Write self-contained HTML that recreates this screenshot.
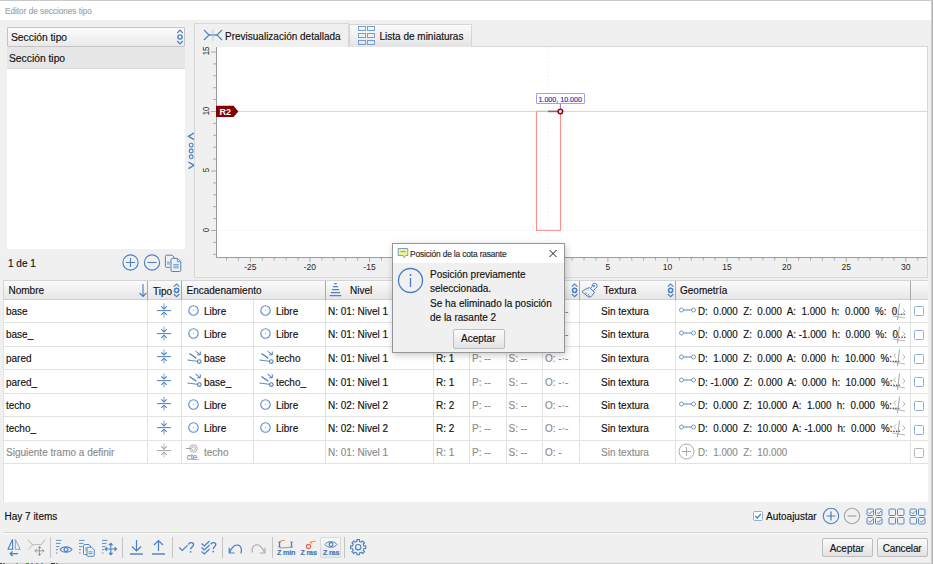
<!DOCTYPE html>
<html><head><meta charset="utf-8"><style>
html,body{margin:0;padding:0;}
body{width:933px;height:564px;overflow:hidden;position:relative;background:#f0f0f0;font-family:"Liberation Sans",sans-serif;}
.t{position:absolute;white-space:nowrap;line-height:1;-webkit-text-stroke:0.15px;}
.b{position:absolute;}
.s{position:absolute;overflow:visible;}
</style></head><body>
<div class="b" style="left:0px;top:0px;width:933px;height:1px;background:#c9c9c9"></div>
<div class="b" style="left:0px;top:1px;width:931px;height:19px;background:#ffffff"></div>
<div class="t" style="left:5.00px;top:7.65px;font-size:8.2px;color:#a3a3a3;">Editor de secciones tipo</div>
<div class="b" style="left:931px;top:1px;width:2px;height:563px;background:linear-gradient(to right,#d9d9d9,#a9a9a9)"></div>
<div class="b" style="left:7px;top:27px;width:178px;height:20px;background:linear-gradient(#fdfdfd,#e9e9e9);border:1px solid #c4c4c4;box-sizing:border-box;border-radius:1px"></div>
<div class="t" style="left:11.00px;top:32.60px;font-size:10.3px;color:#101010;">Sección tipo</div>
<svg class="s" style="left:175px;top:28px;" width="10" height="18" viewBox="0 0 10 18"><path d="M2.2 5 L5 2.2 L7.8 5" fill="none" stroke="#4a7ec2" stroke-width="1.2"/><circle cx="5" cy="9" r="2.1" fill="none" stroke="#4a7ec2" stroke-width="1.4"/><path d="M2.2 13 L5 15.8 L7.8 13" fill="none" stroke="#4a7ec2" stroke-width="1.2"/></svg>
<div class="b" style="left:7px;top:47px;width:178px;height:202px;background:#ffffff"></div>
<div class="b" style="left:7px;top:47px;width:178px;height:22px;background:#e6e6e6;border-bottom:1px solid #d9d9d9;box-sizing:border-box"></div>
<div class="t" style="left:9.00px;top:53.60px;font-size:10.3px;color:#101010;">Sección tipo</div>
<div class="t" style="left:8.00px;top:258.75px;font-size:10px;color:#101010;">1 de 1</div>
<svg class="s" style="left:121px;top:253px;" width="20" height="20" viewBox="0 0 20 20"><circle cx="9.5" cy="9.5" r="7.6" fill="none" stroke="#4a7ec2" stroke-width="1.1"/><path d="M9.5 5v9M5 9.5h9" stroke="#4a7ec2" stroke-width="1.1"/></svg>
<svg class="s" style="left:142px;top:253px;" width="20" height="20" viewBox="0 0 20 20"><circle cx="10" cy="9.5" r="7.6" fill="none" stroke="#4a7ec2" stroke-width="1.1"/><path d="M5.5 9.5h9" stroke="#4a7ec2" stroke-width="1.1"/></svg>
<svg class="s" style="left:164px;top:254px;" width="19" height="19" viewBox="0 0 19 19"><g fill="none" stroke="#4f82c2" stroke-width="1"><path d="M2.6 1.2h5.6l1.8 1.8v1 M6 13.4h-3.4a1.2 1.2 0 0 1 -1.2 -1.2v-9.8a1.2 1.2 0 0 1 1.2 -1.2"/><path d="M8.2 4.4h5.3l3.3 3.3v8.6a1.2 1.2 0 0 1 -1.2 1.2h-7.4a1.2 1.2 0 0 1 -1.2 -1.2v-10.7a1.2 1.2 0 0 1 1.2 -1.2z" fill="#f0f0f0"/><path d="M13.3 4.6v3.2h3.3" stroke-width="0.8"/><path d="M9.3 10.6h5.5M9.3 12.2h5.5M9.3 13.8h5.5M3 8.3h3M3 10h3" stroke-width="0.9" opacity="0.85"/></g></svg>
<svg class="s" style="left:186px;top:130px;" width="9" height="40" viewBox="0 0 9 40"><path d="M8 3 L2.5 6.3 L8 9.6" fill="none" stroke="#4a7ec2" stroke-width="1.4"/><circle cx="5.2" cy="15.2" r="1.9" fill="none" stroke="#4a7ec2" stroke-width="1.1"/><circle cx="5.2" cy="21" r="1.9" fill="none" stroke="#4a7ec2" stroke-width="1.1"/><circle cx="5.2" cy="26.8" r="1.9" fill="none" stroke="#4a7ec2" stroke-width="1.1"/><path d="M2.5 32 L8 35.3 L2.5 38.6" fill="none" stroke="#4a7ec2" stroke-width="1.4"/></svg>
<div class="b" style="left:194px;top:46px;width:734px;height:232px;border:1px solid #d7d7d7;box-sizing:border-box;background:#f0f0f0"></div>
<div class="b" style="left:349px;top:24px;width:123px;height:23px;background:linear-gradient(#fafafa,#e4e4e4);border:1px solid #d7d7d7;border-bottom:none;box-sizing:border-box"></div>
<div class="b" style="left:194px;top:23px;width:155px;height:24px;background:#f0f0f0;border:1px solid #d7d7d7;border-bottom:none;box-sizing:border-box"></div>
<svg class="s" style="left:203px;top:29px;" width="20" height="12" viewBox="0 0 20 12"><path d="M1 1 L6 6 L1 11" fill="none" stroke="#4a7fc1" stroke-width="1.1"/><path d="M19 1 L14 6 L19 11" fill="none" stroke="#4a7fc1" stroke-width="1.1"/><path d="M6 6h8" stroke="#4a7fc1" stroke-width="1.3"/><path d="M10 0v12" stroke="#b9cde6" stroke-width="1"/></svg>
<div class="t" style="left:225.00px;top:31.75px;font-size:10px;color:#101010;">Previsualización detallada</div>
<svg class="s" style="left:357px;top:25px;" width="19" height="21" viewBox="0 0 19 21"><g fill="none" stroke="#6f9ad0" stroke-width="0.95"><rect x="1.5" y="1.5" width="7" height="4"/><rect x="10.5" y="1.5" width="7" height="4"/><rect x="1.5" y="8.5" width="7" height="4"/><rect x="10.5" y="8.5" width="7" height="4"/><rect x="1.5" y="15.5" width="7" height="4"/><rect x="10.5" y="15.5" width="7" height="4"/></g></svg>
<div class="t" style="left:379.50px;top:31.75px;font-size:10px;color:#101010;">Lista de miniaturas</div>
<div class="b" style="left:217px;top:47px;width:710px;height:210px;background:#ffffff"></div>
<div class="b" style="left:215.6px;top:47px;width:1.2px;height:211px;background:#9c9c9c"></div>
<div class="b" style="left:216px;top:256.6px;width:711px;height:1.2px;background:#9c9c9c"></div>
<svg class="s" style="left:0;top:0" width="933" height="564"><g stroke="#9a9a9a" stroke-width="0.8"><line x1="226.51" y1="257" x2="226.51" y2="260.5" /><line x1="238.43" y1="257" x2="238.43" y2="260.5" /><line x1="250.35" y1="257" x2="250.35" y2="262" /><line x1="262.27" y1="257" x2="262.27" y2="260.5" /><line x1="274.19" y1="257" x2="274.19" y2="260.5" /><line x1="286.10" y1="257" x2="286.10" y2="260.5" /><line x1="298.02" y1="257" x2="298.02" y2="260.5" /><line x1="309.94" y1="257" x2="309.94" y2="262" /><line x1="321.86" y1="257" x2="321.86" y2="260.5" /><line x1="333.78" y1="257" x2="333.78" y2="260.5" /><line x1="345.69" y1="257" x2="345.69" y2="260.5" /><line x1="357.61" y1="257" x2="357.61" y2="260.5" /><line x1="369.53" y1="257" x2="369.53" y2="262" /><line x1="381.45" y1="257" x2="381.45" y2="260.5" /><line x1="393.37" y1="257" x2="393.37" y2="260.5" /><line x1="405.28" y1="257" x2="405.28" y2="260.5" /><line x1="417.20" y1="257" x2="417.20" y2="260.5" /><line x1="429.12" y1="257" x2="429.12" y2="262" /><line x1="441.04" y1="257" x2="441.04" y2="260.5" /><line x1="452.96" y1="257" x2="452.96" y2="260.5" /><line x1="464.87" y1="257" x2="464.87" y2="260.5" /><line x1="476.79" y1="257" x2="476.79" y2="260.5" /><line x1="488.71" y1="257" x2="488.71" y2="262" /><line x1="500.63" y1="257" x2="500.63" y2="260.5" /><line x1="512.55" y1="257" x2="512.55" y2="260.5" /><line x1="524.46" y1="257" x2="524.46" y2="260.5" /><line x1="536.38" y1="257" x2="536.38" y2="260.5" /><line x1="548.30" y1="257" x2="548.30" y2="262" /><line x1="560.22" y1="257" x2="560.22" y2="260.5" /><line x1="572.14" y1="257" x2="572.14" y2="260.5" /><line x1="584.05" y1="257" x2="584.05" y2="260.5" /><line x1="595.97" y1="257" x2="595.97" y2="260.5" /><line x1="607.89" y1="257" x2="607.89" y2="262" /><line x1="619.81" y1="257" x2="619.81" y2="260.5" /><line x1="631.73" y1="257" x2="631.73" y2="260.5" /><line x1="643.64" y1="257" x2="643.64" y2="260.5" /><line x1="655.56" y1="257" x2="655.56" y2="260.5" /><line x1="667.48" y1="257" x2="667.48" y2="262" /><line x1="679.40" y1="257" x2="679.40" y2="260.5" /><line x1="691.32" y1="257" x2="691.32" y2="260.5" /><line x1="703.23" y1="257" x2="703.23" y2="260.5" /><line x1="715.15" y1="257" x2="715.15" y2="260.5" /><line x1="727.07" y1="257" x2="727.07" y2="262" /><line x1="738.99" y1="257" x2="738.99" y2="260.5" /><line x1="750.91" y1="257" x2="750.91" y2="260.5" /><line x1="762.82" y1="257" x2="762.82" y2="260.5" /><line x1="774.74" y1="257" x2="774.74" y2="260.5" /><line x1="786.66" y1="257" x2="786.66" y2="262" /><line x1="798.58" y1="257" x2="798.58" y2="260.5" /><line x1="810.50" y1="257" x2="810.50" y2="260.5" /><line x1="822.41" y1="257" x2="822.41" y2="260.5" /><line x1="834.33" y1="257" x2="834.33" y2="260.5" /><line x1="846.25" y1="257" x2="846.25" y2="262" /><line x1="858.17" y1="257" x2="858.17" y2="260.5" /><line x1="870.09" y1="257" x2="870.09" y2="260.5" /><line x1="882.00" y1="257" x2="882.00" y2="260.5" /><line x1="893.92" y1="257" x2="893.92" y2="260.5" /><line x1="905.84" y1="257" x2="905.84" y2="262" /><line x1="917.76" y1="257" x2="917.76" y2="260.5" /><line x1="213" y1="254.30" x2="216" y2="254.30" /><line x1="213" y1="242.40" x2="216" y2="242.40" /><line x1="211" y1="230.50" x2="216" y2="230.50" /><line x1="213" y1="218.60" x2="216" y2="218.60" /><line x1="213" y1="206.70" x2="216" y2="206.70" /><line x1="213" y1="194.80" x2="216" y2="194.80" /><line x1="213" y1="182.90" x2="216" y2="182.90" /><line x1="211" y1="171.00" x2="216" y2="171.00" /><line x1="213" y1="159.10" x2="216" y2="159.10" /><line x1="213" y1="147.20" x2="216" y2="147.20" /><line x1="213" y1="135.30" x2="216" y2="135.30" /><line x1="213" y1="123.40" x2="216" y2="123.40" /><line x1="211" y1="111.50" x2="216" y2="111.50" /><line x1="213" y1="99.60" x2="216" y2="99.60" /><line x1="213" y1="87.70" x2="216" y2="87.70" /><line x1="213" y1="75.80" x2="216" y2="75.80" /><line x1="213" y1="63.90" x2="216" y2="63.90" /><line x1="211" y1="52.00" x2="216" y2="52.00" /></g></svg>
<div class="t" style="left:150.35px;width:200px;text-align:center;top:263.00px;font-size:8.5px;color:#2a2a2a;-webkit-text-stroke:0.03px">-25</div>
<div class="t" style="left:209.94px;width:200px;text-align:center;top:263.00px;font-size:8.5px;color:#2a2a2a;-webkit-text-stroke:0.03px">-20</div>
<div class="t" style="left:269.53px;width:200px;text-align:center;top:263.00px;font-size:8.5px;color:#2a2a2a;-webkit-text-stroke:0.03px">-15</div>
<div class="t" style="left:329.12px;width:200px;text-align:center;top:263.00px;font-size:8.5px;color:#2a2a2a;-webkit-text-stroke:0.03px">-10</div>
<div class="t" style="left:388.71px;width:200px;text-align:center;top:263.00px;font-size:8.5px;color:#2a2a2a;-webkit-text-stroke:0.03px">-5</div>
<div class="t" style="left:507.89px;width:200px;text-align:center;top:263.00px;font-size:8.5px;color:#2a2a2a;-webkit-text-stroke:0.03px">5</div>
<div class="t" style="left:567.48px;width:200px;text-align:center;top:263.00px;font-size:8.5px;color:#2a2a2a;-webkit-text-stroke:0.03px">10</div>
<div class="t" style="left:627.07px;width:200px;text-align:center;top:263.00px;font-size:8.5px;color:#2a2a2a;-webkit-text-stroke:0.03px">15</div>
<div class="t" style="left:686.66px;width:200px;text-align:center;top:263.00px;font-size:8.5px;color:#2a2a2a;-webkit-text-stroke:0.03px">20</div>
<div class="t" style="left:746.25px;width:200px;text-align:center;top:263.00px;font-size:8.5px;color:#2a2a2a;-webkit-text-stroke:0.03px">25</div>
<div class="t" style="left:805.84px;width:200px;text-align:center;top:263.00px;font-size:8.5px;color:#2a2a2a;-webkit-text-stroke:0.03px">30</div>
<div class="t" style="left:186px;top:47.4px;width:40px;height:8px;line-height:8px;text-align:center;font-size:8.5px;color:#2a2a2a;-webkit-text-stroke:0.05px;transform:rotate(-90deg) scaleX(0.9)">15</div>
<div class="t" style="left:186px;top:106.9px;width:40px;height:8px;line-height:8px;text-align:center;font-size:8.5px;color:#2a2a2a;-webkit-text-stroke:0.05px;transform:rotate(-90deg) scaleX(0.9)">10</div>
<div class="t" style="left:186px;top:166.4px;width:40px;height:8px;line-height:8px;text-align:center;font-size:8.5px;color:#2a2a2a;-webkit-text-stroke:0.05px;transform:rotate(-90deg) scaleX(0.9)">5</div>
<div class="t" style="left:186px;top:225.9px;width:40px;height:8px;line-height:8px;text-align:center;font-size:8.5px;color:#2a2a2a;-webkit-text-stroke:0.05px;transform:rotate(-90deg) scaleX(0.9)">0</div>
<svg class="s" style="left:0;top:0" width="933" height="564"><line x1="217" y1="230.5" x2="927" y2="230.5" stroke="#ebebeb" stroke-width="0.8" stroke-dasharray="1.5 2"/><line x1="548.3" y1="47" x2="548.3" y2="256" stroke="#ebebeb" stroke-width="0.8" stroke-dasharray="1.5 2"/><line x1="238" y1="111.4" x2="927" y2="111.4" stroke="#ffc2c2" stroke-width="1"/><rect x="536.4" y="111.4" width="24" height="118.9" fill="none" stroke="#ff7777" stroke-width="0.9"/><line x1="536.4" y1="111.4" x2="548" y2="111.4" stroke="#88ee88" stroke-width="1.2"/><line x1="548" y1="111.4" x2="558" y2="111.4" stroke="#707070" stroke-width="1.6"/><line x1="560.4" y1="104" x2="560.4" y2="109" stroke="#6b6bd8" stroke-width="0.9"/><circle cx="560.4" cy="111.4" r="2.3" fill="#d9d9d9" stroke="#8b0000" stroke-width="1.4"/><path d="M216 105.8h17.5l4.8 5.6l-4.8 5.6h-17.5z" fill="#820000"/></svg>
<div class="t" style="left:219.50px;top:107.75px;font-size:9px;color:#ffffff;font-weight:bold;-webkit-text-stroke:0">R2</div>
<div class="b" style="left:535.5px;top:93.3px;width:49.5px;height:11px;border:1px solid #a0a0f2;background:#fff;box-sizing:border-box;border-radius:1px"></div>
<div class="t" style="left:538.50px;top:96.70px;font-size:7.1px;color:#2f2fb5;">1.000, 10.000</div>
<div class="b" style="left:3px;top:280px;width:925px;height:222px;background:#ffffff;border-left:1px solid #e3e3e3;box-sizing:border-box"></div>
<div class="b" style="left:3px;top:280px;width:925px;height:20px;background:linear-gradient(#fbfbfb,#e6e6e6);border-top:1px solid #d5d5d5;border-bottom:1px solid #cfcfcf;border-left:1px solid #d5d5d5;box-sizing:border-box"></div>
<div class="b" style="left:147.20000000000002px;top:281px;width:1.3px;height:19px;background:#a9a9a9"></div>
<div class="b" style="left:180.9px;top:281px;width:1.3px;height:19px;background:#a9a9a9"></div>
<div class="b" style="left:324.9px;top:281px;width:1.3px;height:19px;background:#a9a9a9"></div>
<div class="b" style="left:578.6px;top:281px;width:1.3px;height:19px;background:#a9a9a9"></div>
<div class="b" style="left:674.9px;top:281px;width:1.3px;height:19px;background:#a9a9a9"></div>
<div class="b" style="left:909.5px;top:281px;width:1.3px;height:19px;background:#a9a9a9"></div>
<div class="b" style="left:4px;top:322.0px;width:924px;height:1px;background:#e2e2e2"></div>
<div class="b" style="left:4px;top:345.5px;width:924px;height:1px;background:#e2e2e2"></div>
<div class="b" style="left:4px;top:369.0px;width:924px;height:1px;background:#e2e2e2"></div>
<div class="b" style="left:4px;top:392.5px;width:924px;height:1px;background:#e2e2e2"></div>
<div class="b" style="left:4px;top:416.0px;width:924px;height:1px;background:#e2e2e2"></div>
<div class="b" style="left:4px;top:439.5px;width:924px;height:1px;background:#e2e2e2"></div>
<div class="b" style="left:4px;top:463.0px;width:924px;height:1px;background:#e2e2e2"></div>
<div class="b" style="left:147.0px;top:300px;width:1px;height:164px;background:#e2e2e2"></div>
<div class="b" style="left:181.0px;top:300px;width:1px;height:164px;background:#e2e2e2"></div>
<div class="b" style="left:252.5px;top:300px;width:1px;height:164px;background:#e2e2e2"></div>
<div class="b" style="left:325.0px;top:300px;width:1px;height:164px;background:#e2e2e2"></div>
<div class="b" style="left:433.0px;top:300px;width:1px;height:164px;background:#e2e2e2"></div>
<div class="b" style="left:469.0px;top:300px;width:1px;height:164px;background:#e2e2e2"></div>
<div class="b" style="left:506.0px;top:300px;width:1px;height:164px;background:#e2e2e2"></div>
<div class="b" style="left:542.0px;top:300px;width:1px;height:164px;background:#e2e2e2"></div>
<div class="b" style="left:579.0px;top:300px;width:1px;height:164px;background:#e2e2e2"></div>
<div class="b" style="left:675.0px;top:300px;width:1px;height:164px;background:#e2e2e2"></div>
<div class="b" style="left:909.5px;top:300px;width:1px;height:164px;background:#e2e2e2"></div>
<div class="t" style="left:8.50px;top:285.75px;font-size:10px;color:#101010;">Nombre</div>
<svg class="s" style="left:138px;top:283px;" width="10" height="15" viewBox="0 0 10 15"><path d="M5 1v12.5M1.6 10 L5 13.5 L8.4 10" fill="none" stroke="#4a7ec2" stroke-width="1.1"/></svg>
<div class="t" style="left:153.00px;top:286.75px;font-size:10px;color:#101010;">Tipo</div>
<svg class="s" style="left:173px;top:283px;" width="7" height="15" viewBox="0 0 7 15"><path d="M0.8 3.6 L3.6 0.9 L6.4 3.6" fill="none" stroke="#4a7ec2" stroke-width="1.1"/><circle cx="3.6" cy="7.3" r="2.1" fill="none" stroke="#4a7ec2" stroke-width="1.5"/><path d="M0.8 11 L3.6 13.7 L6.4 11" fill="none" stroke="#4a7ec2" stroke-width="1.1"/></svg>
<div class="t" style="left:186.50px;top:285.75px;font-size:10px;color:#101010;">Encadenamiento</div>
<svg class="s" style="left:329px;top:282px;" width="14" height="15" viewBox="0 0 14 15"><path d="M5.2 1.6h2.6M4 4.6h5M3 7.6h7M1.9 10.6h9.2M0.7 13.6h11.6" stroke="#4f82c2" stroke-width="1.05"/></svg>
<div class="t" style="left:350.00px;top:285.75px;font-size:10px;color:#101010;">Nivel</div>
<svg class="s" style="left:570.5px;top:283px;" width="7" height="15" viewBox="0 0 7 15"><path d="M0.8 3.6 L3.6 0.9 L6.4 3.6" fill="none" stroke="#4a7ec2" stroke-width="1.1"/><circle cx="3.6" cy="7.3" r="2.1" fill="none" stroke="#4a7ec2" stroke-width="1.5"/><path d="M0.8 11 L3.6 13.7 L6.4 11" fill="none" stroke="#4a7ec2" stroke-width="1.1"/></svg>
<svg class="s" style="left:581px;top:282px;" width="17" height="16" viewBox="0 0 17 16"><g fill="none" stroke="#4a7ec2" stroke-width="1"><path d="M9.6 6.6 L11.2 4.3 A2.5 2.5 0 1 1 14.6 6.2 L12.4 8.6"/><path d="M8.4 5.6 L13.4 10.2 L11.2 13.6 C9.8 15.1 8.2 15.4 7 14.6 L1 9.7 C2.4 8.3 5.4 6.6 8.4 5.6Z"/><circle cx="13" cy="4" r="0.7"/><path d="M4.5 10.5 l1.2 1.8M7.3 12.2 l0.6 1.6" stroke-width="0.8"/></g></svg>
<div class="t" style="left:603.50px;top:285.75px;font-size:10px;color:#101010;">Textura</div>
<svg class="s" style="left:667px;top:283px;" width="7" height="15" viewBox="0 0 7 15"><path d="M0.8 3.6 L3.6 0.9 L6.4 3.6" fill="none" stroke="#4a7ec2" stroke-width="1.1"/><circle cx="3.6" cy="7.3" r="2.1" fill="none" stroke="#4a7ec2" stroke-width="1.5"/><path d="M0.8 11 L3.6 13.7 L6.4 11" fill="none" stroke="#4a7ec2" stroke-width="1.1"/></svg>
<div class="t" style="left:680.00px;top:285.75px;font-size:10px;color:#101010;">Geometría</div>
<div class="t" style="left:6.00px;top:306.75px;font-size:10px;color:#101010;">base</div>
<svg class="s" style="left:157px;top:302.7px;" width="14" height="15" viewBox="0 0 14 15"><path d="M7 0.5v5.3" stroke="#4a7ec2" stroke-width="0.9" opacity="0.8"/><path d="M4.3 3.3 L7 6 L9.7 3.3" fill="none" stroke="#4a7ec2" stroke-width="1.1"/><path d="M0 7.6h14" stroke="#4a7ec2" stroke-width="1"/><path d="M7 14.5v-5.3" stroke="#4a7ec2" stroke-width="0.9" opacity="0.8"/><path d="M4.3 11.9 L7 9.2 L9.7 11.9" fill="none" stroke="#4a7ec2" stroke-width="1.1"/></svg>
<svg class="s" style="left:188px;top:304.9px;" width="11" height="11" viewBox="0 0 11 11"><circle cx="5.5" cy="5.5" r="4.7" fill="none" stroke="#5b8cc9" stroke-width="1.1"/><circle cx="5.5" cy="5.5" r="0.9" fill="#c2d4ec"/></svg>
<div class="t" style="left:204.00px;top:306.75px;font-size:10px;color:#101010;">Libre</div>
<svg class="s" style="left:260px;top:304.9px;" width="11" height="11" viewBox="0 0 11 11"><circle cx="5.5" cy="5.5" r="4.7" fill="none" stroke="#5b8cc9" stroke-width="1.1"/><circle cx="5.5" cy="5.5" r="0.9" fill="#c2d4ec"/></svg>
<div class="t" style="left:276.00px;top:306.75px;font-size:10px;color:#101010;">Libre</div>
<div class="t" style="left:328.00px;top:306.75px;font-size:10px;color:#101010;">N: 01: Nivel 1</div>
<div class="t" style="left:436.00px;top:306.75px;font-size:10px;color:#101010;">R: 1</div>
<div class="t" style="left:472.00px;top:306.75px;font-size:10px;color:#8c8c8c;">P: --</div>
<div class="t" style="left:508.50px;top:306.75px;font-size:10px;color:#8c8c8c;">S: --</div>
<div class="t" style="left:545.00px;top:306.75px;font-size:10px;color:#8c8c8c;">O: -·-</div>
<div class="t" style="left:525.00px;width:200px;text-align:center;top:306.75px;font-size:10px;color:#101010;">Sin textura</div>
<svg class="s" style="left:679px;top:307.0px;" width="17" height="6" viewBox="0 0 17 6"><circle cx="2.5" cy="3" r="2" fill="none" stroke="#6e98cc" stroke-width="1"/><path d="M4.5 3h8" stroke="#6e98cc" stroke-width="1.2"/><circle cx="14.5" cy="3" r="2" fill="none" stroke="#6e98cc" stroke-width="1"/></svg>
<div class="t" style="left:697.5px;top:306.00px;font-size:10.5px;color:#101010;white-space:pre;width:224px;overflow:hidden;transform:scaleX(0.933);transform-origin:0 0">D:  0.000  Z:  0.000  A:  1.000  h:  0.000  %:  0...</div>
<svg class="s" style="left:891.5px;top:302.5px;" width="14" height="18" viewBox="0 0 14 18"><path d="M7.5 0.5 L5.5 17" stroke="#9a9a9a" stroke-width="0.9"/><path d="M0.5 13 L13 15" stroke="#9a9a9a" stroke-width="0.7"/><path d="M4 4.5 L1.8 7 L4 9" fill="none" stroke="#9a9a9a" stroke-width="0.7"/><path d="M10.5 5.5 L13 8 L10.5 10.5" fill="none" stroke="#9a9a9a" stroke-width="0.7"/></svg>
<div class="b" style="left:914px;top:306px;width:9.5px;height:9.5px;border:1.1px solid #8eaedb;border-radius:1.5px;box-sizing:border-box;background:#fff"></div>
<div class="t" style="left:6.00px;top:329.75px;font-size:10px;color:#101010;">base_</div>
<svg class="s" style="left:157px;top:325.9px;" width="14" height="15" viewBox="0 0 14 15"><path d="M7 0.5v5.3" stroke="#4a7ec2" stroke-width="0.9" opacity="0.8"/><path d="M4.3 3.3 L7 6 L9.7 3.3" fill="none" stroke="#4a7ec2" stroke-width="1.1"/><path d="M0 7.6h14" stroke="#4a7ec2" stroke-width="1"/><path d="M7 14.5v-5.3" stroke="#4a7ec2" stroke-width="0.9" opacity="0.8"/><path d="M4.3 11.9 L7 9.2 L9.7 11.9" fill="none" stroke="#4a7ec2" stroke-width="1.1"/></svg>
<svg class="s" style="left:188px;top:328.1px;" width="11" height="11" viewBox="0 0 11 11"><circle cx="5.5" cy="5.5" r="4.7" fill="none" stroke="#5b8cc9" stroke-width="1.1"/><circle cx="5.5" cy="5.5" r="0.9" fill="#c2d4ec"/></svg>
<div class="t" style="left:204.00px;top:329.75px;font-size:10px;color:#101010;">Libre</div>
<svg class="s" style="left:260px;top:328.1px;" width="11" height="11" viewBox="0 0 11 11"><circle cx="5.5" cy="5.5" r="4.7" fill="none" stroke="#5b8cc9" stroke-width="1.1"/><circle cx="5.5" cy="5.5" r="0.9" fill="#c2d4ec"/></svg>
<div class="t" style="left:276.00px;top:329.75px;font-size:10px;color:#101010;">Libre</div>
<div class="t" style="left:328.00px;top:329.75px;font-size:10px;color:#101010;">N: 01: Nivel 1</div>
<div class="t" style="left:436.00px;top:329.75px;font-size:10px;color:#101010;">R: 1</div>
<div class="t" style="left:472.00px;top:329.75px;font-size:10px;color:#8c8c8c;">P: --</div>
<div class="t" style="left:508.50px;top:329.75px;font-size:10px;color:#8c8c8c;">S: --</div>
<div class="t" style="left:545.00px;top:329.75px;font-size:10px;color:#8c8c8c;">O: -·-</div>
<div class="t" style="left:525.00px;width:200px;text-align:center;top:329.75px;font-size:10px;color:#101010;">Sin textura</div>
<svg class="s" style="left:679px;top:330.2px;" width="17" height="6" viewBox="0 0 17 6"><circle cx="2.5" cy="3" r="2" fill="none" stroke="#6e98cc" stroke-width="1"/><path d="M4.5 3h8" stroke="#6e98cc" stroke-width="1.2"/><circle cx="14.5" cy="3" r="2" fill="none" stroke="#6e98cc" stroke-width="1"/></svg>
<div class="t" style="left:697.5px;top:329.00px;font-size:10.5px;color:#101010;white-space:pre;width:224px;overflow:hidden;transform:scaleX(0.933);transform-origin:0 0">D:  0.000  Z:  0.000  A: -1.000  h:  0.000  %:  0...</div>
<svg class="s" style="left:891.5px;top:325.8px;" width="14" height="18" viewBox="0 0 14 18"><path d="M7.5 0.5 L5.5 17" stroke="#9a9a9a" stroke-width="0.9"/><path d="M0.5 13 L13 15" stroke="#9a9a9a" stroke-width="0.7"/><path d="M4 4.5 L1.8 7 L4 9" fill="none" stroke="#9a9a9a" stroke-width="0.7"/><path d="M10.5 5.5 L13 8 L10.5 10.5" fill="none" stroke="#9a9a9a" stroke-width="0.7"/></svg>
<div class="b" style="left:914px;top:330px;width:9.5px;height:9.5px;border:1.1px solid #8eaedb;border-radius:1.5px;box-sizing:border-box;background:#fff"></div>
<div class="t" style="left:6.00px;top:353.75px;font-size:10px;color:#101010;">pared</div>
<svg class="s" style="left:157px;top:349.4px;" width="14" height="15" viewBox="0 0 14 15"><path d="M7 0.5v5.3" stroke="#4a7ec2" stroke-width="0.9" opacity="0.8"/><path d="M4.3 3.3 L7 6 L9.7 3.3" fill="none" stroke="#4a7ec2" stroke-width="1.1"/><path d="M0 7.6h14" stroke="#4a7ec2" stroke-width="1"/><path d="M7 14.5v-5.3" stroke="#4a7ec2" stroke-width="0.9" opacity="0.8"/><path d="M4.3 11.9 L7 9.2 L9.7 11.9" fill="none" stroke="#4a7ec2" stroke-width="1.1"/></svg>
<svg class="s" style="left:187px;top:349.8px;" width="15" height="13" viewBox="0 0 15 13"><path d="M2.5 3.5 L9.3 8.3" stroke="#4a7ec2" stroke-width="1.3"/><path d="M8.5 1 L13 4.5M13.3 1.5 v3.3 h-3.2" fill="none" stroke="#4a7ec2" stroke-width="1"/><path d="M0.5 10 L10.5 11.3" stroke="#4a7ec2" stroke-width="0.9"/><circle cx="12.3" cy="11.6" r="1.8" fill="#fff" stroke="#4a7ec2" stroke-width="1.1"/></svg>
<div class="t" style="left:204.00px;top:353.75px;font-size:10px;color:#101010;">base</div>
<svg class="s" style="left:259px;top:349.8px;" width="15" height="13" viewBox="0 0 15 13"><path d="M2.5 3.5 L9.3 8.3" stroke="#4a7ec2" stroke-width="1.3"/><path d="M8.5 1 L13 4.5M13.3 1.5 v3.3 h-3.2" fill="none" stroke="#4a7ec2" stroke-width="1"/><path d="M0.5 10 L10.5 11.3" stroke="#4a7ec2" stroke-width="0.9"/><circle cx="12.3" cy="11.6" r="1.8" fill="#fff" stroke="#4a7ec2" stroke-width="1.1"/></svg>
<div class="t" style="left:276.00px;top:353.75px;font-size:10px;color:#101010;">techo</div>
<div class="t" style="left:328.00px;top:353.75px;font-size:10px;color:#101010;">N: 01: Nivel 1</div>
<div class="t" style="left:436.00px;top:353.75px;font-size:10px;color:#101010;">R: 1</div>
<div class="t" style="left:472.00px;top:353.75px;font-size:10px;color:#8c8c8c;">P: --</div>
<div class="t" style="left:508.50px;top:353.75px;font-size:10px;color:#8c8c8c;">S: --</div>
<div class="t" style="left:545.00px;top:353.75px;font-size:10px;color:#8c8c8c;">O: -·-</div>
<div class="t" style="left:525.00px;width:200px;text-align:center;top:353.75px;font-size:10px;color:#101010;">Sin textura</div>
<svg class="s" style="left:679px;top:353.8px;" width="17" height="6" viewBox="0 0 17 6"><circle cx="2.5" cy="3" r="2" fill="none" stroke="#6e98cc" stroke-width="1"/><path d="M4.5 3h8" stroke="#6e98cc" stroke-width="1.2"/><circle cx="14.5" cy="3" r="2" fill="none" stroke="#6e98cc" stroke-width="1"/></svg>
<div class="t" style="left:697.5px;top:353.00px;font-size:10.5px;color:#101010;white-space:pre;width:224px;overflow:hidden;transform:scaleX(0.933);transform-origin:0 0">D:  1.000  Z:  0.000  A:  0.000  h:  10.000  %:...</div>
<svg class="s" style="left:891.5px;top:349.2px;" width="14" height="18" viewBox="0 0 14 18"><path d="M7.5 0.5 L5.5 17" stroke="#9a9a9a" stroke-width="0.9"/><path d="M0.5 13 L13 15" stroke="#9a9a9a" stroke-width="0.7"/><path d="M4 4.5 L1.8 7 L4 9" fill="none" stroke="#9a9a9a" stroke-width="0.7"/><path d="M10.5 5.5 L13 8 L10.5 10.5" fill="none" stroke="#9a9a9a" stroke-width="0.7"/></svg>
<div class="b" style="left:914px;top:354px;width:9.5px;height:9.5px;border:1.1px solid #8eaedb;border-radius:1.5px;box-sizing:border-box;background:#fff"></div>
<div class="t" style="left:6.00px;top:377.75px;font-size:10px;color:#101010;">pared_</div>
<svg class="s" style="left:157px;top:372.9px;" width="14" height="15" viewBox="0 0 14 15"><path d="M7 0.5v5.3" stroke="#4a7ec2" stroke-width="0.9" opacity="0.8"/><path d="M4.3 3.3 L7 6 L9.7 3.3" fill="none" stroke="#4a7ec2" stroke-width="1.1"/><path d="M0 7.6h14" stroke="#4a7ec2" stroke-width="1"/><path d="M7 14.5v-5.3" stroke="#4a7ec2" stroke-width="0.9" opacity="0.8"/><path d="M4.3 11.9 L7 9.2 L9.7 11.9" fill="none" stroke="#4a7ec2" stroke-width="1.1"/></svg>
<svg class="s" style="left:187px;top:373.2px;" width="15" height="13" viewBox="0 0 15 13"><path d="M2.5 3.5 L9.3 8.3" stroke="#4a7ec2" stroke-width="1.3"/><path d="M8.5 1 L13 4.5M13.3 1.5 v3.3 h-3.2" fill="none" stroke="#4a7ec2" stroke-width="1"/><path d="M0.5 10 L10.5 11.3" stroke="#4a7ec2" stroke-width="0.9"/><circle cx="12.3" cy="11.6" r="1.8" fill="#fff" stroke="#4a7ec2" stroke-width="1.1"/></svg>
<div class="t" style="left:204.00px;top:377.75px;font-size:10px;color:#101010;">base_</div>
<svg class="s" style="left:259px;top:373.2px;" width="15" height="13" viewBox="0 0 15 13"><path d="M2.5 3.5 L9.3 8.3" stroke="#4a7ec2" stroke-width="1.3"/><path d="M8.5 1 L13 4.5M13.3 1.5 v3.3 h-3.2" fill="none" stroke="#4a7ec2" stroke-width="1"/><path d="M0.5 10 L10.5 11.3" stroke="#4a7ec2" stroke-width="0.9"/><circle cx="12.3" cy="11.6" r="1.8" fill="#fff" stroke="#4a7ec2" stroke-width="1.1"/></svg>
<div class="t" style="left:276.00px;top:377.75px;font-size:10px;color:#101010;">techo_</div>
<div class="t" style="left:328.00px;top:377.75px;font-size:10px;color:#101010;">N: 01: Nivel 1</div>
<div class="t" style="left:436.00px;top:377.75px;font-size:10px;color:#101010;">R: 1</div>
<div class="t" style="left:472.00px;top:377.75px;font-size:10px;color:#8c8c8c;">P: --</div>
<div class="t" style="left:508.50px;top:377.75px;font-size:10px;color:#8c8c8c;">S: --</div>
<div class="t" style="left:545.00px;top:377.75px;font-size:10px;color:#8c8c8c;">O: -·-</div>
<div class="t" style="left:525.00px;width:200px;text-align:center;top:377.75px;font-size:10px;color:#101010;">Sin textura</div>
<svg class="s" style="left:679px;top:377.2px;" width="17" height="6" viewBox="0 0 17 6"><circle cx="2.5" cy="3" r="2" fill="none" stroke="#6e98cc" stroke-width="1"/><path d="M4.5 3h8" stroke="#6e98cc" stroke-width="1.2"/><circle cx="14.5" cy="3" r="2" fill="none" stroke="#6e98cc" stroke-width="1"/></svg>
<div class="t" style="left:697.5px;top:377.00px;font-size:10.5px;color:#101010;white-space:pre;width:224px;overflow:hidden;transform:scaleX(0.933);transform-origin:0 0">D: -1.000  Z:  0.000  A:  0.000  h:  10.000  %:...</div>
<svg class="s" style="left:891.5px;top:372.8px;" width="14" height="18" viewBox="0 0 14 18"><path d="M7.5 0.5 L5.5 17" stroke="#9a9a9a" stroke-width="0.9"/><path d="M0.5 13 L13 15" stroke="#9a9a9a" stroke-width="0.7"/><path d="M4 4.5 L1.8 7 L4 9" fill="none" stroke="#9a9a9a" stroke-width="0.7"/><path d="M10.5 5.5 L13 8 L10.5 10.5" fill="none" stroke="#9a9a9a" stroke-width="0.7"/></svg>
<div class="b" style="left:914px;top:377px;width:9.5px;height:9.5px;border:1.1px solid #8eaedb;border-radius:1.5px;box-sizing:border-box;background:#fff"></div>
<div class="t" style="left:6.00px;top:400.75px;font-size:10px;color:#101010;">techo</div>
<svg class="s" style="left:157px;top:396.4px;" width="14" height="15" viewBox="0 0 14 15"><path d="M7 0.5v5.3" stroke="#4a7ec2" stroke-width="0.9" opacity="0.8"/><path d="M4.3 3.3 L7 6 L9.7 3.3" fill="none" stroke="#4a7ec2" stroke-width="1.1"/><path d="M0 7.6h14" stroke="#4a7ec2" stroke-width="1"/><path d="M7 14.5v-5.3" stroke="#4a7ec2" stroke-width="0.9" opacity="0.8"/><path d="M4.3 11.9 L7 9.2 L9.7 11.9" fill="none" stroke="#4a7ec2" stroke-width="1.1"/></svg>
<svg class="s" style="left:188px;top:398.6px;" width="11" height="11" viewBox="0 0 11 11"><circle cx="5.5" cy="5.5" r="4.7" fill="none" stroke="#5b8cc9" stroke-width="1.1"/><circle cx="5.5" cy="5.5" r="0.9" fill="#c2d4ec"/></svg>
<div class="t" style="left:204.00px;top:400.75px;font-size:10px;color:#101010;">Libre</div>
<svg class="s" style="left:260px;top:398.6px;" width="11" height="11" viewBox="0 0 11 11"><circle cx="5.5" cy="5.5" r="4.7" fill="none" stroke="#5b8cc9" stroke-width="1.1"/><circle cx="5.5" cy="5.5" r="0.9" fill="#c2d4ec"/></svg>
<div class="t" style="left:276.00px;top:400.75px;font-size:10px;color:#101010;">Libre</div>
<div class="t" style="left:328.00px;top:400.75px;font-size:10px;color:#101010;">N: 02: Nivel 2</div>
<div class="t" style="left:436.00px;top:400.75px;font-size:10px;color:#101010;">R: 2</div>
<div class="t" style="left:472.00px;top:400.75px;font-size:10px;color:#8c8c8c;">P: --</div>
<div class="t" style="left:508.50px;top:400.75px;font-size:10px;color:#8c8c8c;">S: --</div>
<div class="t" style="left:545.00px;top:400.75px;font-size:10px;color:#8c8c8c;">O: -·-</div>
<div class="t" style="left:525.00px;width:200px;text-align:center;top:400.75px;font-size:10px;color:#101010;">Sin textura</div>
<svg class="s" style="left:679px;top:400.8px;" width="17" height="6" viewBox="0 0 17 6"><circle cx="2.5" cy="3" r="2" fill="none" stroke="#6e98cc" stroke-width="1"/><path d="M4.5 3h8" stroke="#6e98cc" stroke-width="1.2"/><circle cx="14.5" cy="3" r="2" fill="none" stroke="#6e98cc" stroke-width="1"/></svg>
<div class="t" style="left:697.5px;top:400.00px;font-size:10.5px;color:#101010;white-space:pre;width:224px;overflow:hidden;transform:scaleX(0.933);transform-origin:0 0">D:  0.000  Z:  10.000  A:  1.000  h:  0.000  %:...</div>
<svg class="s" style="left:891.5px;top:396.2px;" width="14" height="18" viewBox="0 0 14 18"><path d="M7.5 0.5 L5.5 17" stroke="#9a9a9a" stroke-width="0.9"/><path d="M0.5 13 L13 15" stroke="#9a9a9a" stroke-width="0.7"/><path d="M4 4.5 L1.8 7 L4 9" fill="none" stroke="#9a9a9a" stroke-width="0.7"/><path d="M10.5 5.5 L13 8 L10.5 10.5" fill="none" stroke="#9a9a9a" stroke-width="0.7"/></svg>
<div class="b" style="left:914px;top:401px;width:9.5px;height:9.5px;border:1.1px solid #8eaedb;border-radius:1.5px;box-sizing:border-box;background:#fff"></div>
<div class="t" style="left:6.00px;top:423.75px;font-size:10px;color:#101010;">techo_</div>
<svg class="s" style="left:157px;top:419.9px;" width="14" height="15" viewBox="0 0 14 15"><path d="M7 0.5v5.3" stroke="#4a7ec2" stroke-width="0.9" opacity="0.8"/><path d="M4.3 3.3 L7 6 L9.7 3.3" fill="none" stroke="#4a7ec2" stroke-width="1.1"/><path d="M0 7.6h14" stroke="#4a7ec2" stroke-width="1"/><path d="M7 14.5v-5.3" stroke="#4a7ec2" stroke-width="0.9" opacity="0.8"/><path d="M4.3 11.9 L7 9.2 L9.7 11.9" fill="none" stroke="#4a7ec2" stroke-width="1.1"/></svg>
<svg class="s" style="left:188px;top:422.1px;" width="11" height="11" viewBox="0 0 11 11"><circle cx="5.5" cy="5.5" r="4.7" fill="none" stroke="#5b8cc9" stroke-width="1.1"/><circle cx="5.5" cy="5.5" r="0.9" fill="#c2d4ec"/></svg>
<div class="t" style="left:204.00px;top:423.75px;font-size:10px;color:#101010;">Libre</div>
<svg class="s" style="left:260px;top:422.1px;" width="11" height="11" viewBox="0 0 11 11"><circle cx="5.5" cy="5.5" r="4.7" fill="none" stroke="#5b8cc9" stroke-width="1.1"/><circle cx="5.5" cy="5.5" r="0.9" fill="#c2d4ec"/></svg>
<div class="t" style="left:276.00px;top:423.75px;font-size:10px;color:#101010;">Libre</div>
<div class="t" style="left:328.00px;top:423.75px;font-size:10px;color:#101010;">N: 02: Nivel 2</div>
<div class="t" style="left:436.00px;top:423.75px;font-size:10px;color:#101010;">R: 2</div>
<div class="t" style="left:472.00px;top:423.75px;font-size:10px;color:#8c8c8c;">P: --</div>
<div class="t" style="left:508.50px;top:423.75px;font-size:10px;color:#8c8c8c;">S: --</div>
<div class="t" style="left:545.00px;top:423.75px;font-size:10px;color:#8c8c8c;">O: -·-</div>
<div class="t" style="left:525.00px;width:200px;text-align:center;top:423.75px;font-size:10px;color:#101010;">Sin textura</div>
<svg class="s" style="left:679px;top:424.2px;" width="17" height="6" viewBox="0 0 17 6"><circle cx="2.5" cy="3" r="2" fill="none" stroke="#6e98cc" stroke-width="1"/><path d="M4.5 3h8" stroke="#6e98cc" stroke-width="1.2"/><circle cx="14.5" cy="3" r="2" fill="none" stroke="#6e98cc" stroke-width="1"/></svg>
<div class="t" style="left:697.5px;top:423.00px;font-size:10.5px;color:#101010;white-space:pre;width:224px;overflow:hidden;transform:scaleX(0.933);transform-origin:0 0">D:  0.000  Z:  10.000  A: -1.000  h:  0.000  %:...</div>
<svg class="s" style="left:891.5px;top:419.8px;" width="14" height="18" viewBox="0 0 14 18"><path d="M7.5 0.5 L5.5 17" stroke="#9a9a9a" stroke-width="0.9"/><path d="M0.5 13 L13 15" stroke="#9a9a9a" stroke-width="0.7"/><path d="M4 4.5 L1.8 7 L4 9" fill="none" stroke="#9a9a9a" stroke-width="0.7"/><path d="M10.5 5.5 L13 8 L10.5 10.5" fill="none" stroke="#9a9a9a" stroke-width="0.7"/></svg>
<div class="b" style="left:914px;top:425px;width:9.5px;height:9.5px;border:1.1px solid #8eaedb;border-radius:1.5px;box-sizing:border-box;background:#fff"></div>
<div class="t" style="left:6.00px;top:447.75px;font-size:10px;color:#8c8c8c;">Siguiente tramo a definir</div>
<svg class="s" style="left:157px;top:443.4px;" width="14" height="15" viewBox="0 0 14 15"><path d="M7 0.5v5.3" stroke="#a5a5a5" stroke-width="0.9" opacity="0.8"/><path d="M4.3 3.3 L7 6 L9.7 3.3" fill="none" stroke="#a5a5a5" stroke-width="1.1"/><path d="M0 7.6h14" stroke="#a5a5a5" stroke-width="1"/><path d="M7 14.5v-5.3" stroke="#a5a5a5" stroke-width="0.9" opacity="0.8"/><path d="M4.3 11.9 L7 9.2 L9.7 11.9" fill="none" stroke="#a5a5a5" stroke-width="1.1"/></svg>
<svg class="s" style="left:185px;top:443px;" width="16" height="9" viewBox="0 0 16 9"><path d="M1 5.5h5" stroke="#9a9a9a" stroke-width="0.9"/><circle cx="8.5" cy="5.5" r="3.8" fill="none" stroke="#9a9a9a" stroke-width="0.8"/><circle cx="8.5" cy="5.5" r="1.9" fill="none" stroke="#9a9a9a" stroke-width="0.8"/></svg>
<div class="t" style="left:186.80px;top:453.65px;font-size:8.2px;color:#8c8c8c;letter-spacing:-0.2px">cte.</div>
<div class="t" style="left:204.00px;top:447.75px;font-size:10px;color:#8c8c8c;">techo</div>
<div class="t" style="left:328.00px;top:447.75px;font-size:10px;color:#8c8c8c;">N: 01: Nivel 1</div>
<div class="t" style="left:436.00px;top:447.75px;font-size:10px;color:#8c8c8c;">R: 1</div>
<div class="t" style="left:472.00px;top:447.75px;font-size:10px;color:#8c8c8c;">P: --</div>
<div class="t" style="left:508.50px;top:447.75px;font-size:10px;color:#8c8c8c;">S: --</div>
<div class="t" style="left:545.00px;top:447.75px;font-size:10px;color:#8c8c8c;">O: -</div>
<div class="t" style="left:525.00px;width:200px;text-align:center;top:447.75px;font-size:10px;color:#8c8c8c;">Sin textura</div>
<svg class="s" style="left:678px;top:443.2px;" width="17" height="17" viewBox="0 0 17 17"><circle cx="8.5" cy="8.5" r="7.5" fill="none" stroke="#a0a0a0" stroke-width="0.9"/><path d="M8.5 4v9M4 8.5h9" stroke="#a0a0a0" stroke-width="0.9"/></svg>
<div class="t" style="left:697.5px;top:447.00px;font-size:10.5px;color:#8c8c8c;white-space:pre;transform:scaleX(0.933);transform-origin:0 0">D:  1.000  Z:  10.000</div>
<div class="b" style="left:914px;top:448px;width:9.5px;height:9.5px;border:1.1px solid #b5b5b5;border-radius:1.5px;box-sizing:border-box;background:#fff"></div>
<div class="b" style="left:392px;top:243px;width:173px;height:110px;box-shadow:1px 2px 7px rgba(0,0,0,0.22)"></div>
<div class="b" style="left:392px;top:243px;width:173px;height:110px;border:1px solid #969696;box-sizing:border-box;background:#f0f0f0"></div>
<div class="b" style="left:393px;top:244px;width:171px;height:18.5px;background:#ffffff"></div>
<svg class="s" style="left:397px;top:247px;" width="12" height="12" viewBox="0 0 12 12"><path d="M1.2 1.5h9.6v7h-2.2l-1.3 2.2l-1.3-2.2h-4.8z" fill="#eef29a" stroke="#6d94c4" stroke-width="0.9" stroke-linejoin="round"/><path d="M3.5 4.6h5" stroke="#6d94c4" stroke-width="0.9"/></svg>
<div class="t" style="left:410.00px;top:250.05px;font-size:8.4px;color:#2a2a2a;letter-spacing:-0.15px">Posición de la cota rasante</div>
<svg class="s" style="left:548px;top:249px;" width="10" height="9" viewBox="0 0 10 9"><path d="M1.5 1 L8.5 8M8.5 1 L1.5 8" stroke="#222" stroke-width="1"/></svg>
<svg class="s" style="left:397px;top:267px;" width="27" height="27" viewBox="0 0 27 27"><circle cx="13.5" cy="13.5" r="12" fill="none" stroke="#4a7ec2" stroke-width="1.3"/><circle cx="13.5" cy="8" r="1" fill="#4a7ec2"/><path d="M13.5 11v9" stroke="#4a7ec2" stroke-width="1.3"/></svg>
<div class="t" style="left:430.00px;top:269.75px;font-size:10px;color:#101010;">Posición previamente</div>
<div class="t" style="left:430.00px;top:283.75px;font-size:10px;color:#101010;">seleccionada.</div>
<div class="t" style="left:430.00px;top:298.75px;font-size:10px;color:#101010;">Se ha eliminado la posición</div>
<div class="t" style="left:430.00px;top:312.75px;font-size:10px;color:#101010;">de la rasante 2</div>
<div class="b" style="left:452.5px;top:328.5px;width:52px;height:20px;background:linear-gradient(#fbfbfb,#e3e3e3);border:1px solid #bdbdbd;border-radius:2px;box-sizing:border-box"></div>
<div class="t" style="left:461.00px;top:333.75px;font-size:10px;color:#101010;">Aceptar</div>
<div class="t" style="left:4.50px;top:511.75px;font-size:10px;color:#101010;">Hay 7 items</div>
<div class="b" style="left:753px;top:511px;width:9.5px;height:9.5px;border:1.1px solid #8eaedb;border-radius:1.5px;box-sizing:border-box;background:#fff"></div>
<svg class="s" style="left:753px;top:511px;" width="10" height="10" viewBox="0 0 10 10"><path d="M2.3 5 L4.3 7 L7.8 3" fill="none" stroke="#4a7ec2" stroke-width="1.2"/></svg>
<div class="t" style="left:766.00px;top:511.75px;font-size:10px;color:#101010;">Autoajustar</div>
<svg class="s" style="left:822px;top:507px;" width="18" height="18" viewBox="0 0 18 18"><circle cx="9" cy="9" r="7.7" fill="none" stroke="#4a7ec2" stroke-width="1.1"/><path d="M9 4.5v9M4.5 9h9" stroke="#4a7ec2" stroke-width="1.2"/></svg>
<svg class="s" style="left:843px;top:507px;" width="18" height="18" viewBox="0 0 18 18"><circle cx="9" cy="9" r="7.7" fill="none" stroke="#a3a3a3" stroke-width="1.1"/><path d="M4.5 9h9" stroke="#a3a3a3" stroke-width="1.2"/></svg>
<svg class="s" style="left:866px;top:508px;" width="17" height="17" viewBox="0 0 17 17"><rect x="1.0" y="1.0" width="6.5" height="6.5" rx="1" fill="none" stroke="#5a8ac6" stroke-width="1"/><path d="M2.5 4.3 l1.5 1.5 l2.5 -2.8" fill="none" stroke="#4a7ec2" stroke-width="0.9"/><rect x="9.5" y="1.0" width="6.5" height="6.5" rx="1" fill="none" stroke="#5a8ac6" stroke-width="1"/><path d="M11 4.3 l1.5 1.5 l2.5 -2.8" fill="none" stroke="#4a7ec2" stroke-width="0.9"/><rect x="1.0" y="9.5" width="6.5" height="6.5" rx="1" fill="none" stroke="#5a8ac6" stroke-width="1"/><path d="M2.5 12.8 l1.5 1.5 l2.5 -2.8" fill="none" stroke="#4a7ec2" stroke-width="0.9"/><rect x="9.5" y="9.5" width="6.5" height="6.5" rx="1" fill="none" stroke="#5a8ac6" stroke-width="1"/><path d="M11 12.8 l1.5 1.5 l2.5 -2.8" fill="none" stroke="#4a7ec2" stroke-width="0.9"/></svg>
<svg class="s" style="left:887.5px;top:508px;" width="17" height="17" viewBox="0 0 17 17"><rect x="1.0" y="1.0" width="6.5" height="6.5" rx="1" fill="none" stroke="#5a8ac6" stroke-width="1"/><rect x="9.5" y="1.0" width="6.5" height="6.5" rx="1" fill="none" stroke="#5a8ac6" stroke-width="1"/><rect x="1.0" y="9.5" width="6.5" height="6.5" rx="1" fill="none" stroke="#5a8ac6" stroke-width="1"/><rect x="9.5" y="9.5" width="6.5" height="6.5" rx="1" fill="none" stroke="#5a8ac6" stroke-width="1"/></svg>
<svg class="s" style="left:909px;top:508px;" width="17" height="17" viewBox="0 0 17 17"><rect x="1.0" y="1.0" width="6.5" height="6.5" rx="1" fill="none" stroke="#5a8ac6" stroke-width="1"/><path d="M2.5 4.3 l1.5 1.5 l2.5 -2.8" fill="none" stroke="#4a7ec2" stroke-width="0.9"/><rect x="9.5" y="1.0" width="6.5" height="6.5" rx="1" fill="none" stroke="#5a8ac6" stroke-width="1"/><rect x="1.0" y="9.5" width="6.5" height="6.5" rx="1" fill="none" stroke="#5a8ac6" stroke-width="1"/><rect x="9.5" y="9.5" width="6.5" height="6.5" rx="1" fill="none" stroke="#5a8ac6" stroke-width="1"/><path d="M11 12.8 l1.5 1.5 l2.5 -2.8" fill="none" stroke="#4a7ec2" stroke-width="0.9"/></svg>
<div class="b" style="left:4px;top:532px;width:924px;height:1px;background:#d4d4d4"></div>
<div class="b" style="left:4px;top:533px;width:924px;height:0.6px;background:#fafafa"></div>
<div class="b" style="left:821.5px;top:537.5px;width:51px;height:19.5px;background:linear-gradient(#fbfbfb,#e2e2e2);border:1px solid #bdbdbd;border-radius:2px;box-sizing:border-box"></div>
<div class="t" style="left:829.70px;top:543.75px;font-size:10px;color:#101010;">Aceptar</div>
<div class="b" style="left:876.5px;top:537.5px;width:51px;height:19.5px;background:linear-gradient(#fbfbfb,#e2e2e2);border:1px solid #bdbdbd;border-radius:2px;box-sizing:border-box"></div>
<div class="t" style="left:882.70px;top:543.75px;font-size:10px;color:#101010;letter-spacing:-0.15px">Cancelar</div>
<div class="b" style="left:50.0px;top:537px;width:1px;height:21px;background:#c4c4c4"></div>
<div class="b" style="left:122.0px;top:537px;width:1px;height:21px;background:#c4c4c4"></div>
<div class="b" style="left:172.0px;top:537px;width:1px;height:21px;background:#c4c4c4"></div>
<div class="b" style="left:221.5px;top:537px;width:1px;height:21px;background:#c4c4c4"></div>
<div class="b" style="left:272.0px;top:537px;width:1px;height:21px;background:#c4c4c4"></div>
<div class="b" style="left:343.8px;top:537px;width:1px;height:21px;background:#c4c4c4"></div>
<svg class="s" style="left:6px;top:538px;" width="16" height="19" viewBox="0 0 16 19"><path d="M6.5 1.5 L6.7 11.3 L2 11.3 Z" fill="none" stroke="#4a7ec2" stroke-width="1.1" stroke-linejoin="round"/><path d="M9.3 1.5 L9.3 11.3 L14.3 11.3 Z" fill="none" stroke="#7fa5d6" stroke-width="1" stroke-linejoin="round"/><path d="M4.5 15.7h7.5" stroke="#4a7ec2" stroke-width="1.3"/><path d="M6.6 13.4 L4.2 15.7 L6.6 18" fill="none" stroke="#4a7ec2" stroke-width="1.3"/></svg>
<svg class="s" style="left:27px;top:538px;" width="19" height="19" viewBox="0 0 19 19"><path d="M1 1.5 L5.5 7 L1 11.7M5.5 7 C8 6.2 11 6.2 14 7 L18 1.5" fill="none" stroke="#a8a8a8" stroke-width="0.8"/><path d="M12.5 8.5v9M8 12.8h9M10.8 10.2 L12.5 8.5 L14.2 10.2M10.8 15.8 L12.5 17.5 L14.2 15.8M9.7 11.1 L8 12.8 L9.7 14.5M15.3 11.1 L17 12.8 L15.3 14.5" fill="none" stroke="#9a9a9a" stroke-width="1"/></svg>
<svg class="s" style="left:55px;top:539px;" width="18" height="17" viewBox="0 0 18 17"><path d="M1 1.4h5.5M1 4.4h4.5M1 7.6h3.5M1 10.7h2M1 14h1.5" stroke="#5a8ac6" stroke-width="0.95"/><path d="M5 10.5 C7.5 6.8 14.5 6.8 17 10.5 C14.5 14.2 7.5 14.2 5 10.5 Z" fill="none" stroke="#4f82c2" stroke-width="1.05"/><circle cx="11" cy="10.5" r="1.9" fill="none" stroke="#4f82c2" stroke-width="1.2"/></svg>
<svg class="s" style="left:78px;top:539px;" width="18" height="18" viewBox="0 0 18 18"><path d="M1 1.4h5.5M1 4.4h4.5M1 7.6h3.5M1 10.7h2M1 14h1.5" stroke="#5a8ac6" stroke-width="0.95"/><path d="M6.5 5.5h4.5l1.5 1.5v8.5h-6a1 1 0 0 1 -1 -1v-8a1 1 0 0 1 1 -1z" fill="none" stroke="#4f82c2" stroke-width="0.95"/><path d="M10 8.2h3.5l2.8 2.8v5.3a1 1 0 0 1 -1 1h-5.3a1 1 0 0 1 -1 -1v-7.1a1 1 0 0 1 1 -1z" fill="#f0f0f0" stroke="#4f82c2" stroke-width="0.95"/><path d="M10.5 12.8h4M10.5 14.5h4M7 9h2M7 11h2" stroke="#4f82c2" stroke-width="0.8"/></svg>
<svg class="s" style="left:101px;top:539px;" width="17" height="17" viewBox="0 0 17 17"><path d="M1 1.4h5.5M1 4.4h4.5M1 7.6h3.5M1 10.7h2M1 14h1.5" stroke="#5a8ac6" stroke-width="0.95"/><path d="M9.8 4.5v11M4.3 10h11" stroke="#4f82c2" stroke-width="1.1"/><path d="M9.8 3.8 L7.8 6 H11.8 Z M9.8 16.2 L7.8 14 H11.8 Z M3.6 10 L5.8 8 V12 Z M16 10 L13.8 8 V12 Z" fill="#4f82c2" stroke="#4f82c2" stroke-width="0.6" stroke-linejoin="round"/></svg>
<svg class="s" style="left:129px;top:539px;" width="15" height="17" viewBox="0 0 15 17"><path d="M7.5 1v11M3 7.5 L7.5 12 L12 7.5" fill="none" stroke="#4a7ec2" stroke-width="1.2"/><path d="M1 15h13" stroke="#4a7ec2" stroke-width="1.4"/></svg>
<svg class="s" style="left:151px;top:539px;" width="15" height="17" viewBox="0 0 15 17"><path d="M7.5 12V1.5M3 6 L7.5 1.5 L12 6" fill="none" stroke="#4a7ec2" stroke-width="1.2"/><path d="M1 15h13" stroke="#4a7ec2" stroke-width="1.4"/></svg>
<svg class="s" style="left:178px;top:541px;" width="17" height="13" viewBox="0 0 17 13"><path d="M1.2 6.6 L4.3 9.4 L9.6 4.4" fill="none" stroke="#4a7ec2" stroke-width="1.3"/><path d="M10.6 3.6 C10.8 1 15.6 1 15.6 3.8 C15.6 5.8 12.6 6 12.6 8.3" fill="none" stroke="#4a7ec2" stroke-width="1.3"/><circle cx="12.6" cy="10.8" r="0.85" fill="#4a7ec2"/></svg>
<svg class="s" style="left:200px;top:539px;" width="18" height="16" viewBox="0 0 18 16"><path d="M1.5 4.5 L4.3 7 L9.5 2M1.5 8.5 L4.3 11 L9.5 6M1.5 12.5 L4.3 15 L9.5 10" fill="none" stroke="#4a7ec2" stroke-width="1.2"/><path d="M11 5.5 C11 3 15.8 3 15.8 5.6 C15.8 7.6 13.2 7.8 13.2 10" fill="none" stroke="#4a7ec2" stroke-width="1.3"/><circle cx="13.2" cy="12.6" r="0.85" fill="#4a7ec2"/></svg>
<svg class="s" style="left:226px;top:542px;" width="18" height="14" viewBox="0 0 18 14"><path d="M15 11.5 C16.5 6 14 2.5 11 2.8 C8 3 5.5 6 3.5 10.5" fill="none" stroke="#4a7ec2" stroke-width="1.2"/><path d="M3.2 5.8 L3.2 11 L8.5 11" fill="none" stroke="#4a7ec2" stroke-width="1.2"/></svg>
<svg class="s" style="left:250px;top:542px;" width="18" height="14" viewBox="0 0 18 14"><path d="M2.5 10.5 C1 6 4 2.5 7 2.8 C10 3 12.5 6 14.5 10.5" fill="none" stroke="#a8a8a8" stroke-width="1.1"/><path d="M15 5.8 L15 11 L9.7 11" fill="none" stroke="#a8a8a8" stroke-width="1.1"/></svg>
<svg class="s" style="left:276px;top:538px;" width="20" height="12" viewBox="0 0 20 12"><path d="M4 4 C4.5 2.5 6 2.2 9 2.2" fill="none" stroke="#e88b3a" stroke-width="1.1"/><path d="M3.5 4 v5 M15.5 4 v5" stroke="#4a7ec2" stroke-width="1.3"/><path d="M2.3 4h2.4M2.3 9h2.4M14.3 4h2.4M14.3 9h2.4" stroke="#4a7ec2" stroke-width="0.9"/><path d="M3.5 10 L16 9.3" stroke="#e88b3a" stroke-width="1.1"/></svg>
<div class="t" style="left:277.00px;top:549.15px;font-size:7.2px;color:#4477b8;font-weight:bold;letter-spacing:-0.2px">Z min</div>
<svg class="s" style="left:300px;top:539px;" width="18" height="12" viewBox="0 0 18 12"><circle cx="8.5" cy="7.5" r="2.1" fill="#fde8e4" stroke="#e0674f" stroke-width="1.2"/><path d="M10.5 3.5 C11 2.5 12.5 2.2 15.5 2.2" fill="none" stroke="#e88b3a" stroke-width="1.1"/><path d="M11 2.2 L10.5 4 L12.3 4.2" fill="none" stroke="#e88b3a" stroke-width="0.9"/></svg>
<div class="t" style="left:300.50px;top:549.15px;font-size:7.2px;color:#4477b8;font-weight:bold;letter-spacing:-0.2px">Z ras</div>
<div class="b" style="left:320.3px;top:537.2px;width:20.5px;height:20.6px;background:linear-gradient(#f7f7f7,#e6e6e6);border:1px solid #dadada;box-sizing:border-box;border-radius:1px"></div>
<svg class="s" style="left:324px;top:540px;" width="14" height="9" viewBox="0 0 14 9"><path d="M1 4.5 C3.5 0.8 10.5 0.8 13 4.5 C10.5 8.2 3.5 8.2 1 4.5 Z" fill="none" stroke="#4a7ec2" stroke-width="1"/><circle cx="7" cy="4.5" r="1.9" fill="none" stroke="#4a7ec2" stroke-width="1.1"/></svg>
<div class="t" style="left:323.00px;top:549.15px;font-size:7.2px;color:#4477b8;font-weight:bold;letter-spacing:-0.2px">Z ras</div>
<svg class="s" style="left:349.8px;top:539.2px;" width="17" height="17" viewBox="0 0 17 17"><path d="M13.96 6.94 L15.78 6.85 L15.78 9.55 L13.96 9.46 L13.17 11.38 L14.52 12.60 L12.60 14.52 L11.38 13.17 L9.46 13.96 L9.55 15.78 L6.85 15.78 L6.94 13.96 L5.02 13.17 L3.80 14.52 L1.88 12.60 L3.23 11.38 L2.44 9.46 L0.62 9.55 L0.62 6.85 L2.44 6.94 L3.23 5.02 L1.88 3.80 L3.80 1.88 L5.02 3.23 L6.94 2.44 L6.85 0.62 L9.55 0.62 L9.46 2.44 L11.38 3.23 L12.60 1.88 L14.52 3.80 L13.17 5.02 Z" fill="none" stroke="#4f82c2" stroke-width="1.15" stroke-linejoin="round"/><circle cx="8.2" cy="8.2" r="2.7" fill="none" stroke="#4f82c2" stroke-width="1.15"/></svg>
<div class="b" style="left:0px;top:562px;width:931px;height:1px;background:#e9e9e9"></div>
<div class="b" style="left:0px;top:563px;width:931px;height:1px;background:#d4d4d4"></div>
<div class="b" style="left:0px;top:563px;width:1.5px;height:1px;background:#444"></div>
<div class="b" style="left:2.5px;top:563px;width:2px;height:1px;background:#777"></div>
<div class="b" style="left:16px;top:563px;width:1.5px;height:1px;background:#999"></div>
<div class="b" style="left:26px;top:563px;width:3px;height:1px;background:#3c8f3c"></div>
<div class="b" style="left:31px;top:563px;width:2px;height:1px;background:#6b8cc4"></div>
<div class="b" style="left:36px;top:563px;width:2px;height:1px;background:#6b8cc4"></div>
<div class="b" style="left:41px;top:563px;width:2px;height:1px;background:#6b8cc4"></div>
<div class="b" style="left:51px;top:563px;width:4px;height:1px;background:#333"></div>
<div class="b" style="left:56px;top:563px;width:2px;height:1px;background:#777"></div>
</body></html>
